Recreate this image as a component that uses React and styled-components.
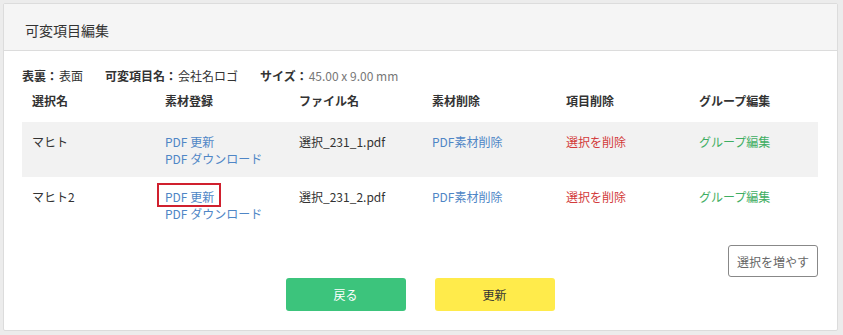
import React from 'react'
import styled, { createGlobalStyle } from 'styled-components'

const GlobalStyle = createGlobalStyle`
    html, body {
        margin: 0;
        padding: 0;
        background: #ececec;
    }
    body {
        font-family: 'Noto Sans CJK JP', 'Noto Sans', sans-serif;
        font-size: 12px;
        line-height: 17px;
        color: #333;
    }
`

const Page = styled.div`
    padding: 3px 5px 5px 3px;
`

const Card = styled.section`
    background: #fff;
    border: 1px solid #dcdcdc;
    border-radius: 2px;
`

const CardHeader = styled.header`
    background: #f5f5f5;
    border-bottom: 1px solid #dcdcdc;
    padding: 17px 21px 11px;
    font-size: 14px;
    line-height: 18px;
    color: #333;
`

const CardBody = styled.div`
    padding: 16px 19px 19px 18px;
`

const InfoLine = styled.div`
    display: flex;
    gap: 22px;
`

const InfoItem = styled.div`
    display: flex;
    align-items: baseline;
`

const Label = styled.span`
    font-weight: bold;
    margin-right: 1px;
`

const Value = styled.span`
    color: ${p => (p.$muted ? '#777' : '#333')};
`

const Row = styled.div`
    display: grid;
    grid-template-columns: 133px 134px 133px 134px 133px 1fr;
    background: ${p => (p.$shaded ? '#f2f2f2' : 'transparent')};
`

const HeadCell = styled.div`
    padding: 8px 10px 13px;
    font-weight: bold;
`

const Cell = styled.div`
    padding: 11px 10px 10px;
    display: flex;
    flex-direction: column;
    align-items: flex-start;
    min-height: 34px;
`

const Link = styled.a`
    position: relative;
    color: ${p => p.$color || '#4f86c6'};
    text-decoration: none;
    cursor: pointer;

    ${p =>
        p.$marked &&
        `
        &::after {
            content: '';
            position: absolute;
            left: -8px;
            right: -7px;
            top: -5px;
            bottom: -2px;
            border: 2px solid #d0202e;
        }
    `}
`

const AddRow = styled.div`
    display: flex;
    justify-content: flex-end;
    margin-top: 13px;
`

const OutlineButton = styled.button`
    width: 90px;
    height: 32px;
    border: 1px solid #888;
    border-radius: 3px;
    background: #fff;
    color: #666;
    font-family: inherit;
    font-size: 12px;
    cursor: pointer;
`

const Actions = styled.div`
    display: flex;
    justify-content: center;
    gap: 29px;
    margin-top: 1px;
`

const ActionButton = styled.button`
    width: 120px;
    height: 33px;
    border: none;
    border-radius: 3px;
    background: ${p => p.$bg};
    color: ${p => p.$fg};
    font-family: inherit;
    font-size: 12px;
    cursor: pointer;
`

const rows = [
    { name: 'マヒト', file: '選択_231_1.pdf' },
    { name: 'マヒト2', file: '選択_231_2.pdf', marked: true },
]

const columns = ['選択名', '素材登録', 'ファイル名', '素材削除', '項目削除', 'グループ編集']

const App = () => (
    <>
        <GlobalStyle />
        <Page>
            <Card>
                <CardHeader>可変項目編集</CardHeader>
                <CardBody>
                    <InfoLine>
                        <InfoItem>
                            <Label>表裏：</Label>
                            <Value>表面</Value>
                        </InfoItem>
                        <InfoItem>
                            <Label>可変項目名：</Label>
                            <Value>会社名ロゴ</Value>
                        </InfoItem>
                        <InfoItem>
                            <Label>サイズ：</Label>
                            <Value $muted>45.00 x 9.00 mm</Value>
                        </InfoItem>
                    </InfoLine>

                    <Row>
                        {columns.map(c => (
                            <HeadCell key={c}>{c}</HeadCell>
                        ))}
                    </Row>
                    {rows.map((r, i) => (
                        <Row key={r.name} $shaded={i % 2 === 0}>
                            <Cell>{r.name}</Cell>
                            <Cell>
                                <Link $marked={r.marked}>PDF 更新</Link>
                                <Link>PDF ダウンロード</Link>
                            </Cell>
                            <Cell>{r.file}</Cell>
                            <Cell>
                                <Link>PDF素材削除</Link>
                            </Cell>
                            <Cell>
                                <Link $color="#d23b3b">選択を削除</Link>
                            </Cell>
                            <Cell>
                                <Link $color="#3fae62">グループ編集</Link>
                            </Cell>
                        </Row>
                    ))}

                    <AddRow>
                        <OutlineButton>選択を増やす</OutlineButton>
                    </AddRow>
                    <Actions>
                        <ActionButton $bg="#3cc47c" $fg="#fff">
                            戻る
                        </ActionButton>
                        <ActionButton $bg="#ffeb4b" $fg="#333">
                            更新
                        </ActionButton>
                    </Actions>
                </CardBody>
            </Card>
        </Page>
    </>
)

export default App
